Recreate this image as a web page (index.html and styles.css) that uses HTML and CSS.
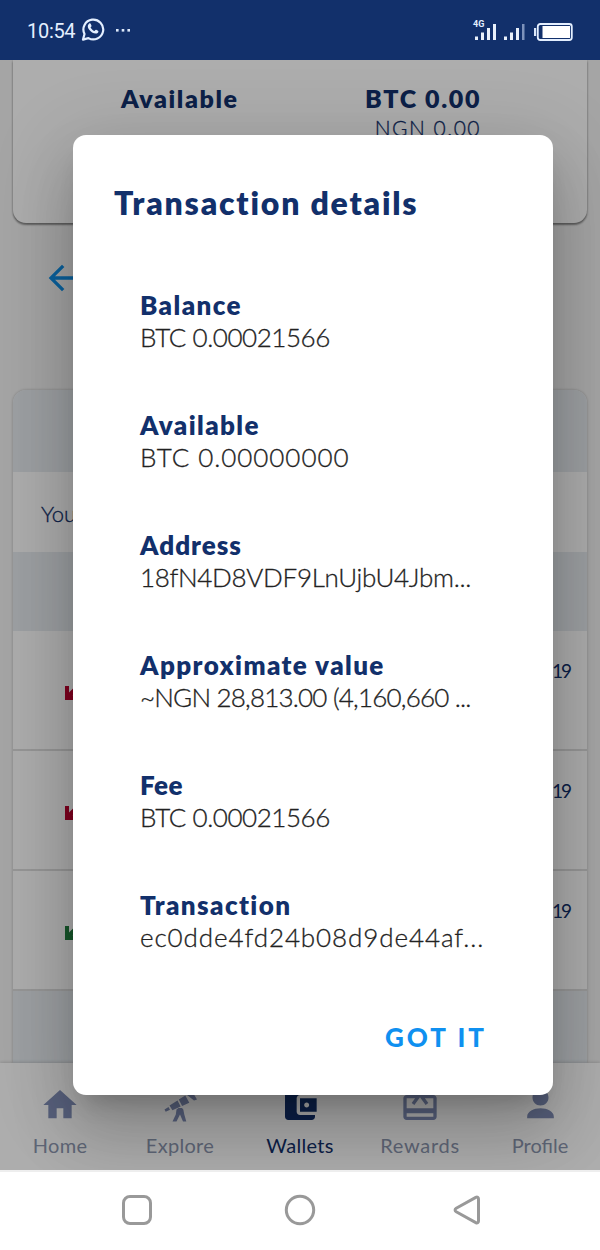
FILE: index.html
```html
<!DOCTYPE html>
<html lang="en">
<head>
    <meta charset="UTF-8">
    <meta name="viewport" content="width=device-width, initial-scale=1.0">
    <title>Wallets</title>
    <link rel="stylesheet" href="styles.css">
</head>
<body>
    <header class="status-bar">
        <div class="status-left">
            <span class="clock">10:54</span>
            <svg class="whatsapp" width="24" height="25" viewBox="0 0 24 25">
                <path d="M2 22.6 3.5 17A9.9 9.9 0 1 1 7.4 21.1Z" fill="none" stroke="#e4efff" stroke-width="2.2" stroke-linejoin="round"/>
                <path d="M8 6.8c.7-.7 1.5-.5 1.8.3l.7 1.7c.2.6-.7 1.3-.9 1.7.8 1.6 2 2.8 3.8 3.5.6-.5 1.1-1.5 1.8-1.2l1.8.9c.7.4.4 1.5-.1 2-1.4 1.4-3.6 1-5.8-.3-2-1.2-3.7-3.1-4.2-5.1-.3-1.4.2-2.7 1.1-3.5z" fill="#e4efff"/>
            </svg>
            <svg width="15" height="4" viewBox="0 0 15 4" fill="#dce8fa">
                <rect x="0" y="0" width="2.600" height="2.600"/>
                <rect x="5.700" y="0" width="2.600" height="2.600"/>
                <rect x="11.400" y="0" width="2.600" height="2.600"/>
            </svg>
        </div>
        <div class="status-right">
            <div class="signal">
                <span class="network">4G</span>
                <svg width="21" height="17" viewBox="0 0 21 17" fill="#e8f0fb">
                    <rect x="0" y="12.500" width="3" height="3.500"/>
                    <rect x="6" y="8.500" width="3" height="7.500"/>
                    <rect x="12" y="4" width="3" height="12"/>
                    <rect x="18" y="0" width="3" height="16"/>
                </svg>
            </div>
            <svg width="21" height="17" viewBox="0 0 21 17" fill="#e8f0fb">
                <rect x="0" y="12.500" width="3" height="3.500"/>
                <rect x="6" y="8.500" width="3" height="7.500"/>
                <rect x="12" y="4" width="3" height="12"/>
                <rect x="18" y="0" width="2.500" height="16" fill="#7d92bb"/>
            </svg>
            <svg class="battery" width="39" height="18" viewBox="0 0 39 18">
                <rect x="0" y="5" width="2.200" height="8" fill="#dce8fa"/>
                <rect x="3.800" y="1" width="34" height="16" rx="2.500" fill="none" stroke="#e4efff" stroke-width="1.800"/>
                <rect x="8.500" y="3" width="27.500" height="12" fill="#fff"/>
            </svg>
        </div>
    </header>

    <main class="page">
        <section class="balance-card">
            <span class="balance-label">Available</span>
            <div class="balance-amounts">
                <div class="balance-btc">BTC 0.00</div>
                <div class="balance-ngn">NGN 0.00</div>
            </div>
        </section>

        <div class="toolbar">
            <svg width="40" height="40" viewBox="0 0 24 24" fill="#0f90e8">
                <path d="M20 11H7.830l5.590-5.590L12 4l-8 8 8 8 1.410-1.410L7.830 13H20v-2z"/>
            </svg>
        </div>

        <section class="history">
            <div class="band"></div>
            <div class="notice">You</div>
            <div class="band"></div>
            <div class="row">
                <svg class="dir sent" width="14" height="14" viewBox="0 0 14 14"><path d="M0 0h4v6.500L10.500 0 14 3.500 7.500 10H14v4H0z"/></svg>
                <span class="date">19</span>
            </div>
            <div class="row">
                <svg class="dir sent" width="14" height="14" viewBox="0 0 14 14"><path d="M0 0h4v6.500L10.500 0 14 3.500 7.500 10H14v4H0z"/></svg>
                <span class="date">19</span>
            </div>
            <div class="row">
                <svg class="dir received" width="14" height="14" viewBox="0 0 14 14"><path d="M0 0h4v6.500L10.500 0 14 3.500 7.500 10H14v4H0z"/></svg>
                <span class="date">19</span>
            </div>
            <div class="band"></div>
        </section>

        <nav class="tabs">
            <a class="tab">
                <svg width="40" height="40" viewBox="0 0 24 24"><path d="M10 20v-6h4v6h5v-8h3L12 3 2 12h3v8z"/></svg>
                <span class="tab-home">Home</span>
            </a>
            <a class="tab">
                <svg width="40" height="40" viewBox="0 0 40 40">
                    <path d="M4.500 24.500 8.500 22l1.500 2.700-4.300 2.100zM9.500 20.500l8-5 3.200 6-8.300 3.800zM18.800 14.500l6.500-4 4 7.200-7.200 3.300zM26.500 9.500l5.500-3.500 5 8.500-3 1zM16.500 24.500l2-1.500h3.500l1.300 1.500 1 5 2 7H23L20 29.500 16.500 36.500h-4l3.300-7z"/>
                </svg>
                <span class="tab-explore">Explore</span>
            </a>
            <a class="tab active">
                <svg width="40" height="40" viewBox="0 0 24 24"><path d="M21 18v1c0 1.100-.9 2-2 2H5c-1.110 0-2-.9-2-2V5c0-1.100.89-2 2-2h14c1.100 0 2 .9 2 2v1h-9c-1.110 0-2 .9-2 2v8c0 1.100.89 2 2 2h9zm-9-2h10V8H12v8zm4-2.500c-.83 0-1.500-.67-1.500-1.500s.67-1.500 1.500-1.500 1.500.67 1.500 1.500-.67 1.500-1.500 1.500z"/></svg>
                <span class="tab-wallets">Wallets</span>
            </a>
            <a class="tab">
                <svg width="40" height="40" viewBox="0 0 24 24"><path d="M20 6h-2.180c.11-.31.18-.65.18-1 0-1.660-1.340-3-3-3-1.050 0-1.960.54-2.500 1.350l-.5.670-.5-.68C10.960 2.540 10.050 2 9 2 7.340 2 6 3.340 6 5c0 .35.070.69.180 1H4c-1.110 0-1.990.89-1.990 2L2 19c0 1.110.89 2 2 2h16c1.110 0 2-.89 2-2V8c0-1.110-.89-2-2-2zm0 13H4v-2h16v2zm0-5H4V8h5.080L7 10.830 8.620 12 12 7.400l3.380 4.600L17 10.830 14.920 8H20v6z"/></svg>
                <span class="tab-rewards">Rewards</span>
            </a>
            <a class="tab">
                <svg width="40" height="40" viewBox="0 0 24 24"><path d="M12.300 12.300c2.700 0 4.800-2.100 4.800-4.800S15 2.700 12.300 2.700 7.500 4.800 7.500 7.500 9.600 12.300 12.300 12.300zm0 1.700c-4 0-8 2-8 5v1h16v-1c0-3-4-5-8-5z"/></svg>
                <span class="tab-profile">Profile</span>
            </a>
        </nav>

        <div class="overlay">
            <div class="modal">
                <h1 class="modal-title">Transaction details</h1>
                <dl class="details">
                    <div class="detail">
                        <dt class="l-balance">Balance</dt>
                        <dd class="v-amount">BTC 0.00021566</dd>
                    </div>
                    <div class="detail">
                        <dt class="l-available">Available</dt>
                        <dd class="v-zero">BTC 0.00000000</dd>
                    </div>
                    <div class="detail">
                        <dt class="l-address">Address</dt>
                        <dd class="v-address">18fN4D8VDF9LnUjbU4Jbm...</dd>
                    </div>
                    <div class="detail">
                        <dt class="l-approx">Approximate value</dt>
                        <dd class="v-approx">~NGN 28,813.00 (4,160,660 ...</dd>
                    </div>
                    <div class="detail">
                        <dt class="l-fee">Fee</dt>
                        <dd class="v-amount">BTC 0.00021566</dd>
                    </div>
                    <div class="detail">
                        <dt class="l-transaction">Transaction</dt>
                        <dd class="v-hash">ec0dde4fd24b08d9de44af...</dd>
                    </div>
                </dl>
                <button class="got-it">GOT IT</button>
            </div>
        </div>
    </main>

    <footer class="system-nav">
        <svg width="32" height="32" viewBox="0 0 32 32"><rect x="2.500" y="2.500" width="27" height="27" rx="6.500"/></svg>
        <svg width="32" height="32" viewBox="0 0 32 32"><circle cx="16" cy="16" r="13.700"/></svg>
        <svg class="back" width="32" height="32" viewBox="0 0 32 32"><path d="M4.200 14.300 23.800 3.400c1.500-.8 2.700 0 2.700 1.500v22.200c0 1.500-1.200 2.300-2.700 1.500L4.200 17.700c-1.500-.9-1.500-2.500 0-3.400z"/></svg>
    </footer>
</body>
</html>
```
FILE: styles.css
```css
* {
    box-sizing: border-box;
}

body {
    margin: 0;
    width: 600px;
    height: 1250px;
    overflow: hidden;
    display: flex;
    flex-direction: column;
    font-family: Lato, sans-serif;
    color: #12306b;
    background-color: #fff;
}

svg {
    display: block;
    flex: none;
}

/* phone status bar */
.status-bar {
    height: 60px;
    padding: 2px 27px 0;
    display: flex;
    align-items: center;
    justify-content: space-between;
    background-color: #12306b;
}

.status-left {
    display: flex;
    align-items: center;
}

.clock {
    font-family: Roboto, sans-serif;
    font-size: 20px;
    letter-spacing: -0.3px;
    color: #e4efff;
}

.whatsapp {
    margin: -3px 11px 0 6px;
}

.status-right {
    display: flex;
    align-items: center;
    gap: 8px;
}

.status-right > svg {
    margin-top: 2px;
}

.status-right > .battery {
    margin: 1px 0 0 1px;
}

.signal {
    position: relative;
    margin-top: 2px;
}

.network {
    position: absolute;
    left: -2px;
    top: -4px;
    font: bold 9px/9px Roboto, sans-serif;
    color: #e4efff;
}

/* page under the dialog */
.page {
    position: relative;
    height: 1110px;
    overflow: hidden;
    display: flex;
    flex-direction: column;
    background-color: #f4f4f4;
}

.balance-card {
    height: 163px;
    margin: 0 13px;
    padding: 23px 107px 0 108px;
    display: flex;
    justify-content: space-between;
    background-color: #fff;
    border-radius: 0 0 13px 13px;
    box-shadow: 0 2px 2px rgba(0, 0, 0, 0.4), 0 0 3px rgba(0, 0, 0, 0.2);
}

.balance-label,
.balance-btc {
    font-size: 25px;
    line-height: 31px;
    font-weight: 800;
    letter-spacing: 1.6px;
}

.balance-btc {
    margin-right: -1px;
}

.balance-amounts {
    text-align: right;
}

.balance-ngn {
    margin-right: -1px;
    font-size: 21px;
    line-height: 27px;
    font-weight: 300;
    letter-spacing: 1.5px;
    -webkit-text-stroke: 0.3px;
}

.toolbar {
    height: 167px;
    padding: 35px 0 0 42px;
}

.history {
    flex: 1;
    margin: 0 13px;
    background-color: #fff;
    border-radius: 13px 13px 0 0;
    overflow: hidden;
    box-shadow: 0 0 3px rgba(0, 0, 0, 0.25);
}

.band {
    height: 82px;
    background-color: #e7ecf1;
}

.notice {
    height: 80px;
    padding-left: 28px;
    font-size: 22px;
    line-height: 83px;
    font-weight: 300;
    -webkit-text-stroke: 0.3px;
}

.notice + .band {
    height: 79px;
}

.row {
    height: 120px;
    padding: 0 17px 2px 52px;
    display: flex;
    justify-content: space-between;
    border-bottom: 2px solid #ddd;
}

.dir {
    margin-top: 55px;
}

.sent {
    fill: #bd0030;
}

.received {
    fill: #228040;
}

.date {
    margin-top: 28px;
    font-size: 19px;
    line-height: 24px;
    letter-spacing: -2px;
}

.tabs {
    height: 107px;
    display: flex;
    background-color: #fff;
    box-shadow: 0 -1px 3px rgba(0, 0, 0, 0.15);
}

.tab {
    flex: 1;
    padding-top: 22px;
    display: flex;
    flex-direction: column;
    align-items: center;
    gap: 8px;
    font-size: 20px;
    line-height: 24px;
    color: #8d97b0;
    fill: #8290b8;
}

.tab.active {
    color: #12306b;
    fill: #12306b;
}

.tab-home,
.tab-explore,
.tab-wallets {
    letter-spacing: 0.3px;
}

.tab-rewards {
    letter-spacing: 0.7px;
}

/* dialog */
.overlay {
    position: absolute;
    inset: 0;
    padding: 75px 47px 75px 73px;
    background-color: rgba(0, 0, 0, 0.32);
}

.modal {
    height: 960px;
    padding: 49px 69px 0 67px;
    display: flex;
    flex-direction: column;
    background-color: #fff;
    border-radius: 13px;
    box-shadow: 0 18px 25px -12px rgba(0, 0, 0, 0.2),
        0 40px 63px 5px rgba(0, 0, 0, 0.14),
        0 15px 77px 13px rgba(0, 0, 0, 0.12);
}

.modal-title {
    margin: 0 0 67px -26px;
    font-size: 32px;
    line-height: 38px;
    font-weight: 800;
    letter-spacing: 1.8px;
    white-space: nowrap;
}

.details {
    margin: 0;
    display: flex;
    flex-direction: column;
    gap: 56px;
}

.detail dt,
.detail dd {
    margin: 0;
    font-size: 26px;
    line-height: 32px;
    white-space: nowrap;
}

.detail dt {
    font-weight: 800;
    letter-spacing: 1.4px;
}

.detail dd {
    color: #222;
    font-weight: 300;
    -webkit-text-stroke: 0.3px;
}

/* tracking per string */
.detail .l-address {
    letter-spacing: 1px;
}

.detail .l-fee {
    letter-spacing: 0.5px;
}

.v-amount {
    letter-spacing: -0.45px;
}

.v-zero {
    letter-spacing: 0.95px;
}

.v-address {
    letter-spacing: -0.3px;
}

.v-approx {
    letter-spacing: -0.8px;
}

.v-hash {
    letter-spacing: 0.9px;
}

.got-it {
    margin: 68px -3px 0 0;
    padding: 0;
    align-self: flex-end;
    border: none;
    background: none;
    font-family: inherit;
    font-size: 26px;
    line-height: 32px;
    font-weight: 900;
    letter-spacing: 3px;
    color: #0f90f0;
}

/* android buttons */
.system-nav {
    height: 80px;
    padding-bottom: 2px;
    display: flex;
    justify-content: center;
    align-items: center;
    gap: 131px;
    border-top: 2px solid #eee;
    fill: none;
    stroke: #999;
    stroke-width: 3;
}

.back {
    margin: 0 -5px 0 5px;
}
```
